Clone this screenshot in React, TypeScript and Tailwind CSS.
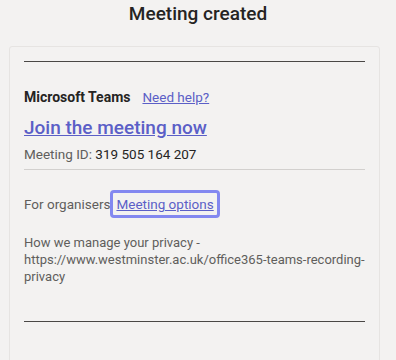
import React from 'react';

export default function App() {
  return (
    <div className="w-[396px] h-[360px] overflow-hidden bg-[#f3f2f1] text-[#252423]" style={{ fontFamily: 'Roboto, "Noto Sans", sans-serif' }}>
      <h1 className="h-[46px] text-center text-[19px] font-medium leading-[28px]">Meeting created</h1>
      <div className="ml-[9px] w-[371px] h-[330px] rounded-[3px] border border-[#e6e4e2] bg-[#f3f2f1] px-[14px] pt-[14px]">
        <div className="h-px bg-[#4a4846]" />
        <div className="mt-[26px] flex items-center gap-[12px] text-[14px] leading-[18px]">
          <span className="font-bold">Microsoft Teams</span>
          <a href="#" className="text-[13.5px] text-[#5b5fc7] underline">Need help?</a>
        </div>
        <a href="#" className="mt-[9px] block w-fit text-[19px] font-medium leading-[26px] text-[#5b5fc7] underline">Join the meeting now</a>
        <p className="mt-[4px] text-[13.5px] leading-[18px] text-[#605e5c]">
          Meeting ID: <span className="text-[#252423]">319 505 164 207</span>
        </p>
        <div className="mt-[6px] h-px bg-[#d2d0ce]" />
        <div className="mt-[20px] flex items-center text-[13.5px] leading-[18px] text-[#605e5c]">
          <span>For organisers</span>
          <a href="#" className="rounded-[4px] border-[3px] border-[#8388f0] px-[3px] py-[2px] text-[#5b5fc7] underline">Meeting options</a>
        </div>
        <p className="mt-[16px] text-[13px] leading-[17px] text-[#605e5c]">
          How we manage your privacy -<br />
          https://www.westminster.ac.uk/office365-teams-recording-privacy
        </p>
        <div className="mt-[36px] h-px bg-[#4a4846]" />
      </div>
    </div>
  );
}
